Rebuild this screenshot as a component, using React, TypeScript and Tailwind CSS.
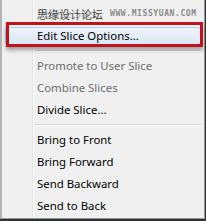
import React from "react";

const font = { fontFamily: '"Noto Sans", "Open Sans", sans-serif' };

function Item({ label, disabled, highlight }: { label: string; disabled?: boolean; highlight?: boolean }) {
  return (
    <div className="relative h-[22px] flex items-center pl-[35px]">
      {highlight && (
        <div className="absolute inset-x-[3px] inset-y-[2px] rounded-[3px] border border-[#aecff7] bg-gradient-to-b from-[#eef3fb] to-[#dbe6f5]" />
      )}
      <span className={`relative whitespace-nowrap text-[11.4px] leading-none ${disabled ? "text-[#6d6d6d]" : "text-[#000000]"}`}>{label}</span>
    </div>
  );
}

function Sep() {
  return (
    <div className="h-[8px] flex flex-col justify-center pl-[33px] pr-[3px]">
      <div className="h-px bg-[#d7d7d7]" />
      <div className="h-px bg-white" />
    </div>
  );
}

export default function App() {
  return (
    <div className="w-[206px] h-[221px] bg-[#2e3136] overflow-hidden" style={font}>
      <div className="relative w-[205px] h-[219px] bg-[#f0f0f0] border-l-2 border-r border-b border-l-[#b4b4b4] border-r-[#979797] border-b-[#979797] flex">
        <div className="w-[32px] shrink-0 border-r border-r-white">
          <div className="h-full border-r border-r-[#e2e3e3]" />
        </div>
        <div className="flex-1 flex flex-col -ml-[32px] pt-[3px]">
          <div className="relative h-[22px] flex items-center pl-[35px] whitespace-nowrap">
            <span className="absolute left-[35px] text-[11.4px] leading-none text-[#c4c4c4]">Delete Slice</span>
            <span className="relative text-[11px] leading-none text-[#4a4a4a]" style={{ fontFamily: '"Noto Sans CJK SC", sans-serif' }}>思缘设计论坛</span>
            <span className="relative ml-[7px] text-[8px] font-bold tracking-[0.6px] leading-none text-[#8a8a8a]" style={{ fontFamily: '"DejaVu Sans Mono", monospace' }}>WWW.MISSYUAN.COM</span>
          </div>
          <Item label="Edit Slice Options..." highlight />
          <Sep />
          <Item label="Promote to User Slice" disabled />
          <Item label="Combine Slices" disabled />
          <Item label="Divide Slice..." />
          <Sep />
          <Item label="Bring to Front" />
          <Item label="Bring Forward" />
          <Item label="Send Backward" />
          <Item label="Send to Back" />
        </div>
        <div className="absolute left-[4px] top-[22px] w-[197px] h-[25px] border-[3px] border-[#c0141c] shadow-[0_3px_4px_rgba(0,0,0,0.35)]" />
      </div>
    </div>
  );
}
